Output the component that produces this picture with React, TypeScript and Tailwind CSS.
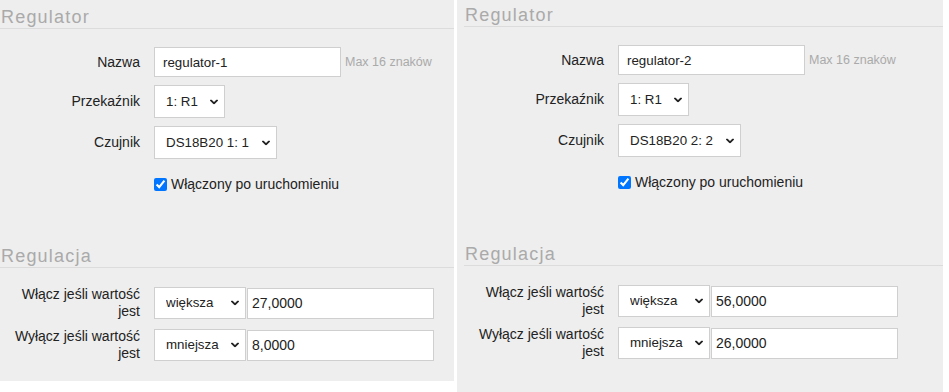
import React from 'react';

interface RegulatorData {
    name: string;
    relay: string;
    relayW: string;
    sensor: string;
    onAbove: string;
    offBelow: string;
}

const regulators: RegulatorData[] = [
    { name: 'regulator-1', relay: '1: R1', relayW: 'w-[71px]', sensor: 'DS18B20 1: 1', onAbove: '27,0000', offBelow: '8,0000' },
    { name: 'regulator-2', relay: '1: R1', relayW: 'w-[71px]', sensor: 'DS18B20 2: 2', onAbove: '56,0000', offBelow: '26,0000' },
];

const Chevron = () => (
    <svg width="8" height="5" viewBox="0 0 8 5" className="absolute right-[6px] top-1/2 -translate-y-1/2 pointer-events-none">
        <polyline points="1,0.8 4,3.8 7,0.8" fill="none" stroke="#222" strokeWidth="1.9" strokeLinecap="round" strokeLinejoin="round" />
    </svg>
);

const Select: React.FC<{ value: string; options: string[]; className: string }> = ({ value, options, className }) => (
    <div className={`relative bg-white border border-[#cfcfcf] ${className}`}>
        <select
            defaultValue={value}
            className="appearance-none w-full h-full bg-transparent pl-[11px] pr-[18px] text-[13.33px] text-[#222] outline-none"
        >
            {options.map(o => <option key={o} value={o}>{o}</option>)}
        </select>
        <Chevron />
    </div>
);

const Label: React.FC<{ children: React.ReactNode }> = ({ children }) => (
    <label className="w-[140px] shrink-0 text-right text-[14px] leading-[17px] text-[#222]">{children}</label>
);

const Header: React.FC<{ title: string; className: string }> = ({ title, className }) => (
    <div className={`pb-[1px] border-b border-[#dcdcdc] ${className}`}>
        <h2 className="text-[18px] leading-[20px] tracking-[1.2px] text-[#aaa] pl-[1px]">{title}</h2>
    </div>
);

const Panel: React.FC<{ data: RegulatorData; first: boolean }> = ({ data, first }) => (
    <div className={first ? 'w-[454px] h-[381px] bg-[#eeeeee] shrink-0' : 'w-[486px] h-[392px] bg-[#eeeeee] shrink-0 ml-[3px] pl-[7px]'}>
        <Header title="Regulator" className={first ? 'pt-[7px]' : 'pt-[5px]'} />

        <div className="flex items-center mt-[18px]">
            <Label>Nazwa</Label>
            <input
                type="text"
                defaultValue={data.name}
                className="ml-[14px] w-[187px] h-[30px] bg-white border border-[#cfcfcf] pl-[8px] text-[13.33px] text-[#222] outline-none"
            />
            <span className="ml-[4px] text-[12.5px] text-[#aaa]">Max 16 znaków</span>
        </div>

        <div className="flex items-center mt-[8px]">
            <Label>Przekaźnik</Label>
            <Select value={data.relay} options={['1: R1', '2: R2']} className={`ml-[14px] h-[33px] ${data.relayW}`} />
        </div>

        <div className="flex items-center mt-[8px]">
            <Label>Czujnik</Label>
            <Select value={data.sensor} options={[data.sensor]} className="ml-[14px] h-[33px] w-[123px]" />
        </div>

        <div className="flex items-center mt-[16px] h-[19px] pl-[154px]">
            <input type="checkbox" defaultChecked className="w-[13px] h-[13px] accent-[#0075ff]" />
            <span className="ml-[4px] text-[14px] text-[#222]">Włączony po uruchomieniu</span>
        </div>

        <Header title="Regulacja" className="pt-[7px] mt-[45px]" />

        <div className="flex items-center mt-[18px]">
            <Label>Włącz jeśli wartość jest</Label>
            <Select value="większa" options={['większa', 'mniejsza']} className="ml-[14px] h-[32px] w-[92px]" />
            <input
                type="text"
                defaultValue={data.onAbove}
                className="ml-[1px] w-[187px] h-[31px] bg-white border border-[#cfcfcf] pl-[4px] text-[14px] text-[#222] outline-none"
            />
        </div>

        <div className="flex items-center mt-[8px]">
            <Label>Wyłącz jeśli wartość jest</Label>
            <Select value="mniejsza" options={['większa', 'mniejsza']} className="ml-[14px] h-[32px] w-[92px]" />
            <input
                type="text"
                defaultValue={data.offBelow}
                className="ml-[1px] w-[187px] h-[31px] bg-white border border-[#cfcfcf] pl-[4px] text-[14px] text-[#222] outline-none"
            />
        </div>
    </div>
);

const App: React.FC = () => (
    <div className="w-[949px] h-[392px] overflow-hidden bg-white flex items-start font-['Liberation_Sans',Arial,sans-serif]">
        {regulators.map((r, i) => <Panel key={r.name} data={r} first={i === 0} />)}
    </div>
);

export default App;
